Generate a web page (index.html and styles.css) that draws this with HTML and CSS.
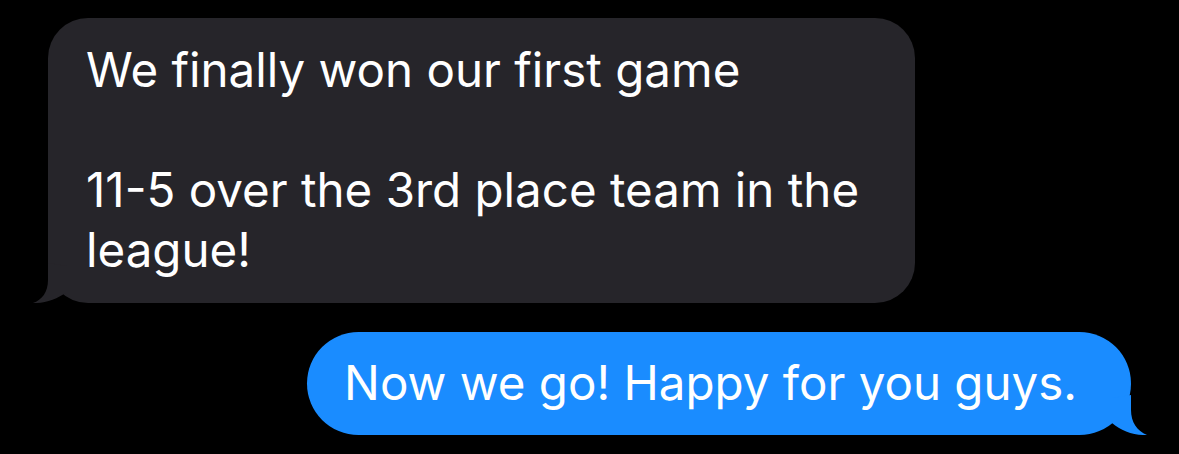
FILE: index.html
```html
<!DOCTYPE html>
<html lang="en">
<head>
<meta charset="utf-8">
<link rel="stylesheet" href="styles.css">
</head>
<body>
<main class="thread">
  <div class="bubble bubble-in">
    <p class="msg">We finally won our first game</p>
    <p class="msg blank">&nbsp;</p>
    <p class="msg">11-5 over the 3rd place team in the</p>
    <p class="msg">league!</p>
    <svg class="tail tail-in" width="40" height="45" viewBox="0 0 40 45"><path d="M20 5 L20 22 C20 34 14 42 5 45 C17 45.5 29 41 39 34 L39 8 Z"/></svg>
  </div>
  <div class="bubble bubble-out">
    <p class="msg">Now we go! Happy for you guys.</p>
    <svg class="tail tail-out" width="40" height="45" viewBox="0 0 40 45"><path d="M20 5 L20 20 C20 32 26 41 36 45 C23 45.5 10 41 1 33 L1 8 Z"/></svg>
  </div>
</main>
</body>
</html>
```
FILE: styles.css
```css
html, body {
  margin: 0;
  padding: 0;
  background: #000;
}
body {
  width: 1179px;
  height: 454px;
  overflow: hidden;
  font-family: Inter, "Noto Sans", "Liberation Sans", sans-serif;
  color: #fff;
}
.thread {
  display: flex;
  flex-direction: column;
  padding: 18px 48px 0 48px;
  gap: 29px;
}
.bubble {
  position: relative;
  box-sizing: border-box;
}
.msg {
  margin: 0;
  font-size: 47.5px;
  line-height: 60px;
  white-space: nowrap;
}
.bubble-in {
  align-self: flex-start;
  width: 867px;
  height: 285px;
  padding: 22px 38px;
  background: #26252a;
  border-radius: 40px;
}
.bubble-out {
  align-self: flex-end;
  height: 103px;
  padding: 21px 54px 22px 37px;
  background: #1a8cff;
  border-radius: 52px;
}
.tail {
  position: absolute;
  bottom: 0;
}
.tail-in {
  left: -20px;
  fill: #26252a;
}
.tail-out {
  right: -20px;
  fill: #1a8cff;
}
```
